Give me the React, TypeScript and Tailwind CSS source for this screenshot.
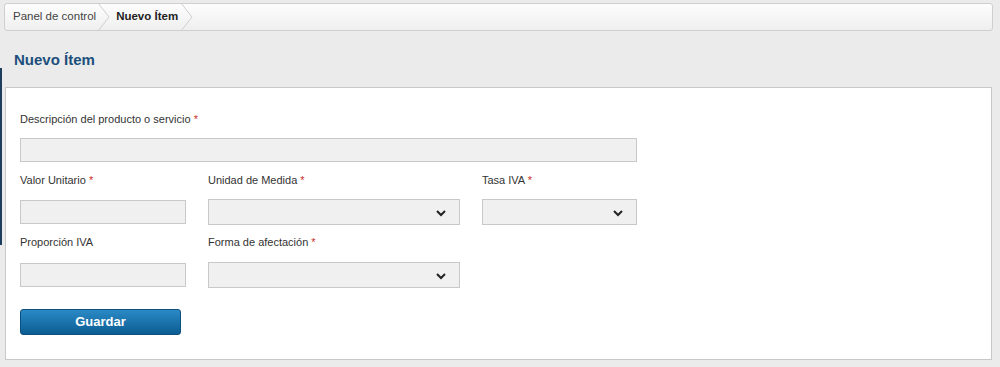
import React from 'react'

function Chevron() {
  return (
    <svg width="13" height="28" viewBox="0 0 13 28" className="shrink-0">
      <path d="M1 0 L12 14 L1 28" fill="none" stroke="#cfcfcf" strokeWidth="1" />
    </svg>
  )
}

function Label({ text, required }: { text: string; required?: boolean }) {
  return (
    <label className="block text-[11px] leading-[14px] text-[#333]">
      {text}
      {required && <span className="text-[#c9302c]"> *</span>}
    </label>
  )
}

function Input({ w }: { w: string }) {
  return <input type="text" className={`${w} h-[24px] border border-[#c8c8c8] bg-[#f0f0f0] outline-none block`} />
}

function Select({ w }: { w: string }) {
  return (
    <div className={`${w} relative h-[26px] border border-[#c8c8c8] bg-[#f0f0f0]`}>
      <svg width="10" height="7" viewBox="0 0 10 7" className="absolute right-[13px] top-[10px]">
        <path d="M1 1 L5 5 L9 1" fill="none" stroke="#222" strokeWidth="2" />
      </svg>
    </div>
  )
}

export default function App() {
  return (
    <div className="w-[1000px] h-[367px] bg-[#ebebeb] overflow-hidden" style={{ fontFamily: '"Liberation Sans", Arial, sans-serif' }}>
      <div className="pt-[3px] pl-[4px] pr-[7px]">
        <nav className="h-[28px] flex items-center rounded-[3px] border border-[#cfcfcf] bg-gradient-to-b from-[#fdfdfd] to-[#efefef] text-[11.5px]">
          <span className="pl-[8px] pr-[1px] text-[#444]">Panel de control</span>
          <Chevron />
          <span className="pl-[6px] pr-[2px] font-bold text-[#222]">Nuevo Ítem</span>
          <Chevron />
        </nav>
      </div>
      <div className="flex">
        <div className="w-[2px] h-[177px] mt-[37px] bg-[#1d3e5c] shrink-0" />
        <div className="flex-1 pl-[3px] pr-[8px]">
          <h1 className="pl-[9px] pt-[18px] h-[56px] text-[15px] font-bold text-[#1c4f7c]">Nuevo Ítem</h1>
          <div className="h-[273px] bg-white border border-[#c8c8c8] pl-[14px] pt-[24px]">
            <Label text="Descripción del producto o servicio" required />
            <div className="mt-[12px]">
              <Input w="w-[617px]" />
            </div>
            <div className="flex mt-[11px]">
              <div className="w-[188px]">
                <Label text="Valor Unitario" required />
                <div className="mt-[13px]"><Input w="w-[166px]" /></div>
              </div>
              <div className="w-[274px]">
                <Label text="Unidad de Medida" required />
                <div className="mt-[12px]"><Select w="w-[252px]" /></div>
              </div>
              <div>
                <Label text="Tasa IVA" required />
                <div className="mt-[12px]"><Select w="w-[155px]" /></div>
              </div>
            </div>
            <div className="flex mt-[10px]">
              <div className="w-[188px]">
                <Label text="Proporción IVA" />
                <div className="mt-[14px]"><Input w="w-[166px]" /></div>
              </div>
              <div>
                <Label text="Forma de afectación" required />
                <div className="mt-[13px]"><Select w="w-[252px]" /></div>
              </div>
            </div>
            <button className="mt-[21px] w-[161px] h-[26px] rounded-[3px] border border-[#0b4f7f] bg-gradient-to-b from-[#2a8ac6] to-[#0b5d93] text-white font-bold text-[13px]">
              Guardar
            </button>
          </div>
        </div>
      </div>
    </div>
  )
}
